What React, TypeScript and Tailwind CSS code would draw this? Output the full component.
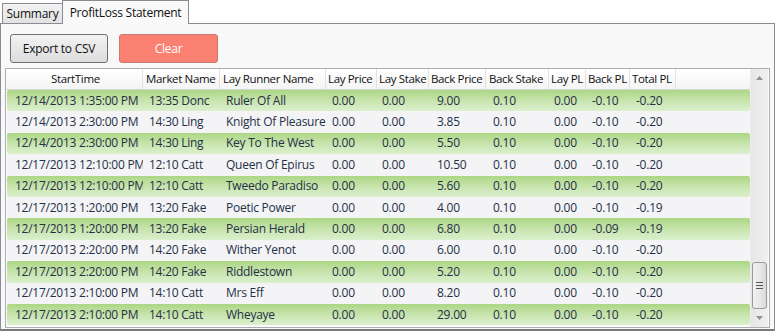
import React from "react";

const cols = [
  { name: "StartTime", w: "w-[137px]", head: "pl-[45px]", cell: "pl-[9px]" },
  { name: "Market Name", w: "w-[77px]", head: "pl-[3px]", cell: "pl-[6px]" },
  { name: "Lay Runner Name", w: "w-[106px]", head: "pl-[3px]", cell: "pl-[6px]" },
  { name: "Lay Price", w: "w-[51px]", head: "pl-[2px]", cell: "pl-[6px]" },
  { name: "Lay Stake", w: "w-[52px]", head: "pl-[2px]", cell: "pl-[5px]" },
  { name: "Back Price", w: "w-[57px]", head: "pl-[2px]", cell: "pl-[8px]" },
  { name: "Back Stake", w: "w-[63px]", head: "pl-[3px]", cell: "pl-[7px]" },
  { name: "Lay PL", w: "w-[37px]", head: "pl-[2px]", cell: "pl-[5px]" },
  { name: "Back PL", w: "w-[44px]", head: "pl-[2px]", cell: "pl-[6px]" },
  { name: "Total PL", w: "w-[46px]", head: "pl-[2px]", cell: "pl-[6px]" },
];

const rows: string[][] = [
  ["12/14/2013 1:35:00 PM", "13:35 Donc", "Ruler Of All", "0.00", "0.00", "9.00", "0.10", "0.00", "-0.10", "-0.20"],
  ["12/14/2013 2:30:00 PM", "14:30 Ling", "Knight Of Pleasure", "0.00", "0.00", "3.85", "0.10", "0.00", "-0.10", "-0.20"],
  ["12/14/2013 2:30:00 PM", "14:30 Ling", "Key To The West", "0.00", "0.00", "5.50", "0.10", "0.00", "-0.10", "-0.20"],
  ["12/17/2013 12:10:00 PM", "12:10 Catt", "Queen Of Epirus", "0.00", "0.00", "10.50", "0.10", "0.00", "-0.10", "-0.20"],
  ["12/17/2013 12:10:00 PM", "12:10 Catt", "Tweedo Paradiso", "0.00", "0.00", "5.60", "0.10", "0.00", "-0.10", "-0.20"],
  ["12/17/2013 1:20:00 PM", "13:20 Fake", "Poetic Power", "0.00", "0.00", "4.00", "0.10", "0.00", "-0.10", "-0.19"],
  ["12/17/2013 1:20:00 PM", "13:20 Fake", "Persian Herald", "0.00", "0.00", "6.80", "0.10", "0.00", "-0.09", "-0.19"],
  ["12/17/2013 2:20:00 PM", "14:20 Fake", "Wither Yenot", "0.00", "0.00", "6.00", "0.10", "0.00", "-0.10", "-0.20"],
  ["12/17/2013 2:20:00 PM", "14:20 Fake", "Riddlestown", "0.00", "0.00", "5.20", "0.10", "0.00", "-0.10", "-0.20"],
  ["12/17/2013 2:10:00 PM", "14:10 Catt", "Mrs Eff", "0.00", "0.00", "8.20", "0.10", "0.00", "-0.10", "-0.20"],
  ["12/17/2013 2:10:00 PM", "14:10 Catt", "Wheyaye", "0.00", "0.00", "29.00", "0.10", "0.00", "-0.10", "-0.20"],
];

function ScrollBar() {
  return (
    <div className="w-[18px] flex flex-col bg-gradient-to-r from-[#e6e6e6] to-[#f0f0f0] border-l border-[#ededed]">
      <div className="h-[18px] flex items-center justify-center">
        <svg width="7" height="4" viewBox="0 0 7 4">
          <path d="M0 4 L3.5 0 L7 4 Z" fill="#909090" />
        </svg>
      </div>
      <div className="flex-1 flex flex-col justify-end px-[1px]">
        <div className="h-[47px] rounded-[3px] border border-[#9a9a9a] bg-gradient-to-r from-[#f2f2f2] via-[#e8e8e8] to-[#d8d8d8] flex flex-col items-center justify-center gap-[2px]">
          <div className="w-[7px] h-px bg-[#555]" />
          <div className="w-[7px] h-px bg-[#555]" />
          <div className="w-[7px] h-px bg-[#555]" />
        </div>
      </div>
      <div className="h-[18px] flex items-center justify-center">
        <svg width="7" height="4" viewBox="0 0 7 4">
          <path d="M0 0 L3.5 4 L7 0 Z" fill="#909090" />
        </svg>
      </div>
    </div>
  );
}

export default function App() {
  return (
    <div
      className="w-[776px] h-[332px] bg-white text-[12px] tracking-[-0.25px] overflow-hidden"
      style={{ fontFamily: '"Open Sans", "Noto Sans", sans-serif' }}
    >
      {/* tabs */}
      <div className="flex items-end h-[23px] pl-[2px]">
        <div className="h-[20px] w-[61px] border border-[#898c95] border-b-0 bg-gradient-to-b from-[#f2f2f2] to-[#e2e2e2] flex items-center justify-center text-[#111]">
          Summary
        </div>
        <div className="relative z-10 h-[24px] w-[127px] -ml-px border border-[#898c95] border-b-0 bg-[#f9f9f9] flex items-center justify-center text-[#111] -mb-px">
          ProfitLoss Statement
        </div>
      </div>

      {/* panel */}
      <div className="w-[775px] h-[308px] border border-[#898c95] border-b-2 border-b-[#7a7a7a] bg-[#f8f8f8] pl-[4px] pt-[10px]">
        <div className="flex gap-[11px] pl-[5px]">
          <button className="w-[98px] h-[29px] rounded-[3px] border border-[#707070] bg-gradient-to-b from-[#f3f3f3] to-[#dcdcdc] text-[#111]">
            Export to CSV
          </button>
          <button className="w-[99px] h-[29px] rounded-[3px] border border-[#c97a70] bg-[#fa8072] text-white">
            Clear
          </button>
        </div>

        {/* grid */}
        <div className="mt-[5px] w-[765px] h-[260px] border border-[#abadb3] bg-[#fbfbfb] flex">
          <div className="w-[744px] flex flex-col">
            <div className="flex h-[21px] bg-gradient-to-b from-white to-[#f4f4f4] border-b border-[#d5d5d5] text-[#111] text-[11.5px] tracking-[-0.35px]">
              {cols.map((c) => (
                <div
                  key={c.name}
                  className={`${c.w} ${c.head} shrink-0 flex items-center border-r border-[#e2e2e2] whitespace-nowrap overflow-hidden`}
                >
                  {c.name}
                </div>
              ))}
            </div>
            {rows.map((r, i) => (
              <div
                key={i}
                className={`flex h-[21.4px] ml-px rounded-[2px] text-[#243047] ${
                  i % 2 === 0
                    ? "bg-gradient-to-b from-[#acd684] via-[#c8e4ad] to-[#dbefcd]"
                    : "bg-[#f4f4f6]"
                }`}
              >
                {r.map((v, j) => (
                  <div
                    key={j}
                    className={`${cols[j].w} ${cols[j].cell} shrink-0 flex items-center whitespace-nowrap overflow-hidden ${
                      j === 0 ? "-ml-px" : ""
                    }`}
                  >
                    {v}
                  </div>
                ))}
              </div>
            ))}
          </div>
          <ScrollBar />
        </div>
      </div>
    </div>
  );
}
